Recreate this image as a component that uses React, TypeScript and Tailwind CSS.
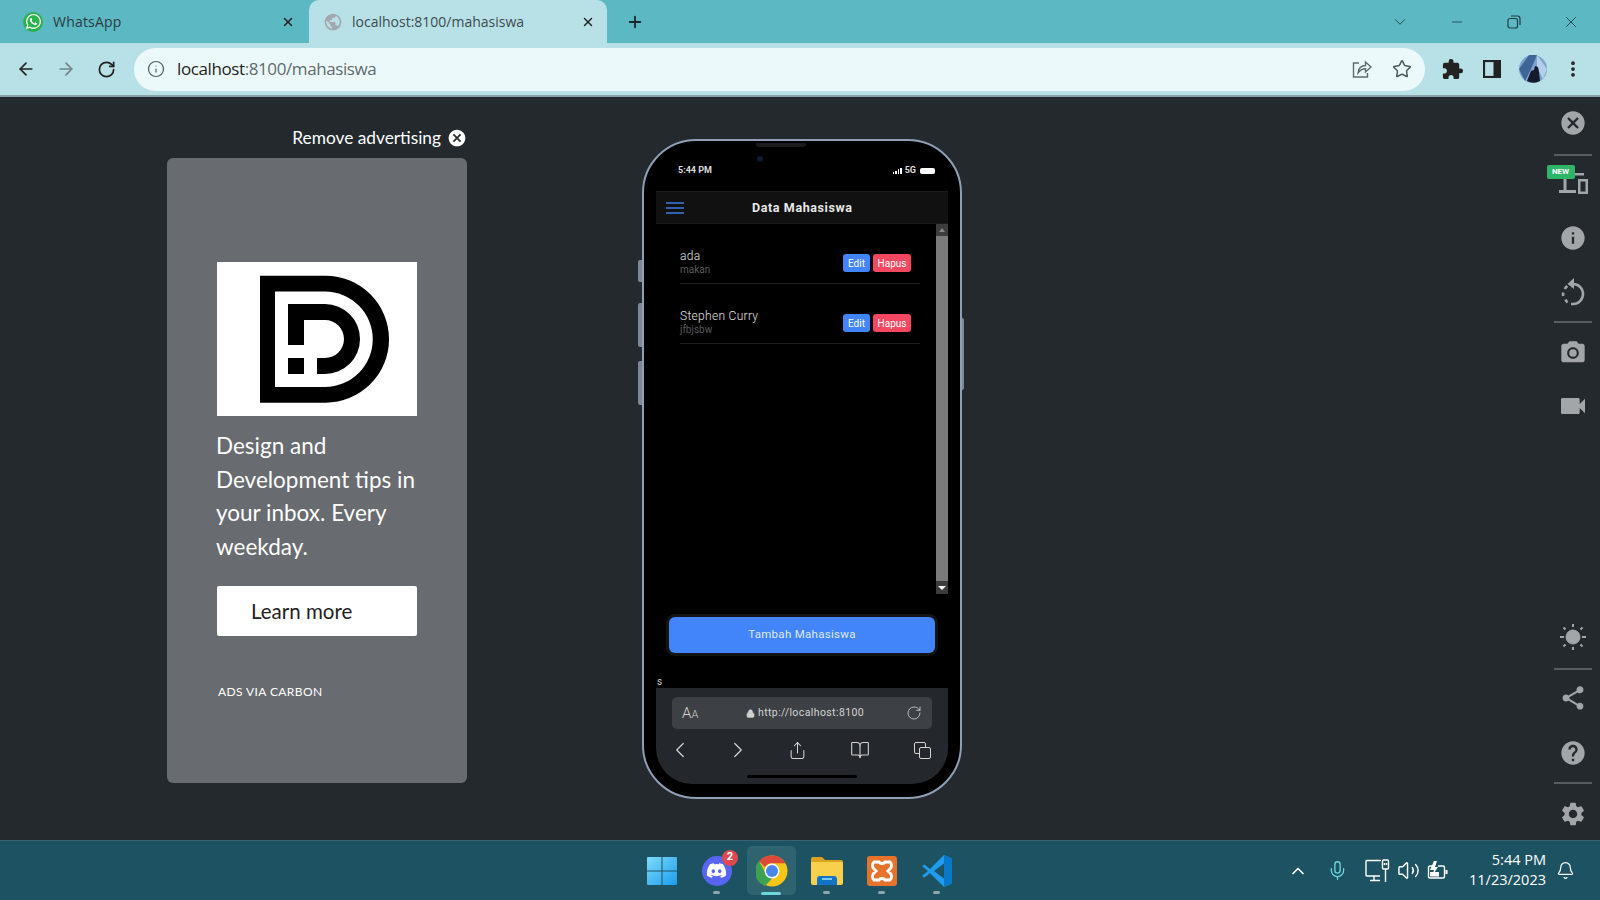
import React from 'react';
import { ArrowLeft, ArrowRight, RotateCw, Info, Star, X, Plus, ChevronDown, Minus, MoreVertical, ChevronLeft, ChevronRight, Share, BookOpen, Lock, ChevronUp, Mic, Volume2, Bell } from 'lucide-react';
import { FaWhatsapp, FaDiscord } from 'react-icons/fa';
import { MdCancel, MdInfo, MdPhotoCamera, MdVideocam, MdShare, MdHelp, MdSettings, MdPublic, MdExtension } from 'react-icons/md';

const Logo = () => (
    <svg width="200" height="154" viewBox="0 0 200 154" className="bg-white">
        <path fillRule="evenodd" d="M43 13.7H108.5A63.5 63.5 0 0 1 108.5 140.7H43ZM58 29.5V125H108A47.7 47.7 0 0 0 108 29.5Z" />
        <path d="M71 42H108A35 35 0 0 1 108 112H100V96H108A19 19 0 0 0 108 58H87V83H71Z" />
        <rect x="71" y="96" width="16" height="16" />
    </svg>
);

const Restore = () => (
    <svg width="16" height="16" viewBox="0 0 16 16" fill="none" stroke="#1f3d44" strokeWidth="1.2">
        <rect x="2" y="4.5" width="9.5" height="9.5" rx="2" />
        <path d="M5 2h6.5A2.5 2.5 0 0 1 14 4.5V11" />
    </svg>
);

const ShareBox = () => (
    <svg width="20" height="20" viewBox="0 0 20 20" fill="none" stroke="#5f6a6e" strokeWidth="1.4">
        <path d="M7 4H1.5v14h14v-4" />
        <path d="M6 14c0-5 4-7.5 7.5-7.5V3l5.5 5-5.5 5V9.800C10 9.800 8 11 6 14Z" />
    </svg>
);

const SidePanel = () => (
    <svg width="18" height="18" viewBox="0 0 18 18">
        <rect x="1" y="1" width="16" height="16" fill="none" stroke="#222" strokeWidth="2.200" />
        <rect x="10.500" y="1" width="6.500" height="16" fill="#222" />
    </svg>
);

const Avatar = () => (
    <svg width="28" height="28" viewBox="0 0 28 28">
        <circle cx="14" cy="14" r="14" fill="#7da3cf" />
        <path d="M0 14 10 0h8l-6 14-6 12Z" fill="#3f6596" />
        <path d="M18 0l10 14-4 10-6-12Z" fill="#b6cfe8" />
        <path d="M8 26l4-10 3-1 1-4 3 1 1 5 1 9a14 14 0 0 1-13 0Z" fill="#141a2c" />
    </svg>
);

const Devices = () => (
    <svg width="30" height="22" viewBox="0 0 30 22" fill="#a3a6a9">
        <path d="M3 0h22v2.500H7.500V17H17v3H0v-3h4.500V2.500H3Z" />
        <path fillRule="evenodd" d="M19 6h10v15H19ZM21.500 8.500v10h5v-10Z" />
    </svg>
);

const HistoryIcon = () => (
    <svg width="26" height="28" viewBox="0 0 26 28" fill="none" stroke="#a3a6a9" strokeWidth="2.600">
        <path d="M13 6a10 10 0 0 1 0 20h-2" />
        <path d="M7.500 24.500a10 10 0 0 1-2-3M3.200 18a10 10 0 0 1 0-3.500M4.800 11a10 10 0 0 1 2.500-3" />
        <path d="M14 0 7.500 6 14 11Z" fill="#a3a6a9" strokeWidth="0" />
    </svg>
);

const Sun = () => (
    <svg width="28" height="28" viewBox="0 0 28 28" fill="#a3a6a9" stroke="#a3a6a9">
        <circle cx="14" cy="14" r="7" />
        <path strokeWidth="2" d="M14 1v3M14 24v3M1 14h4M23 14h4M4.500 4.500l2 2M21.500 21.500l2 2M4.500 23.500l2-2M21.500 6.500l2-2" />
    </svg>
);

const Windows = () => (
    <svg width="30" height="30" viewBox="0 0 30 30">
        <defs>
            <linearGradient id="win" x1="0" y1="0" x2="1" y2="1">
                <stop offset="0" stopColor="#7fdcf8" />
                <stop offset="1" stopColor="#1a9bee" />
            </linearGradient>
        </defs>
        <path fill="url(#win)" d="M1 1h13.500v13.500H0V2a1 1 0 0 1 1-1ZM15.500 1H29a1 1 0 0 1 1 1v12.500H15.500ZM0 15.500h14.500V29H1a1 1 0 0 1-1-1ZM15.500 15.500H30V28a1 1 0 0 1-1 1H15.500Z" />
    </svg>
);

const ChromeIcon = () => (
    <svg width="32" height="32" viewBox="0 0 32 32">
        <circle cx="16" cy="16" r="15.500" fill="#f5c518" />
        <path d="M16 .5A15.500 15.500 0 0 1 29.500 8.300H16A8 8 0 0 0 8.900 12.300L3 6A15.500 15.500 0 0 1 16 .5Z" fill="#dd4a3a" />
        <path d="M3 6l7.500 13.500a7 7 0 0 0 6 3.500L9 31A15.500 15.500 0 0 1 3 6Z" fill="#3da252" />
        <circle cx="16" cy="16" r="7.500" fill="#fff" />
        <circle cx="16" cy="16" r="6" fill="#4a86e8" />
    </svg>
);

const Folder = () => (
    <svg width="32" height="28" viewBox="0 0 32 28">
        <path d="M0 2a2 2 0 0 1 2-2h9l3 3h16a2 2 0 0 1 2 2v3H0Z" fill="#dba420" />
        <path d="M0 5h32v21a2 2 0 0 1-2 2H2a2 2 0 0 1-2-2Z" fill="#f8d04c" />
        <path d="M6 28v-6a3 3 0 0 1 3-3h14a3 3 0 0 1 3 3v6Z" fill="#1174c9" />
        <rect x="11" y="21" width="10" height="2" fill="#7cc7f2" />
    </svg>
);

const Xampp = () => (
    <svg width="30" height="30" viewBox="0 0 30 30">
        <rect width="30" height="30" rx="3" fill="#e6732c" />
        <path fill="none" stroke="#fff" strokeWidth="3" d="M7 6h5c1 2 5 2 6 0h5c2 2 2 5 0 7l-2 2 2 2c2 2 2 5 0 7h-5c-1-2-5-2-6 0H7c-2-2-2-5 0-7l2-2-2-2c-2-2-2-5 0-7Z" />
    </svg>
);

const VsCode = () => (
    <svg width="30" height="32" viewBox="0 0 30 32">
        <path d="M22 0 30 3.500v25L22 32 8 18l-5.500 4.500L0 21l6-5-6-5 2.500-1.500L8 14Z" fill="#1f9cf0" />
        <path d="M22 0v32l8-3.500v-25Z" fill="#0a78c8" />
        <path d="M22 8.500 12 16l10 7.500Z" fill="#1c5261" />
    </svg>
);

const MonitorPlug = () => (
    <svg width="26" height="24" viewBox="0 0 26 24" fill="none" stroke="#fff" strokeWidth="1.400">
        <path d="M16 1.500H2a1 1 0 0 0-1 1V16a1 1 0 0 0 1 1h13M5 21.500h10M9 17v4" />
        <rect x="17.500" y="1" width="6" height="9" rx="1" />
        <path d="M20.500 10v13M19.500 4v2M21.500 4v2" />
    </svg>
);

const BatteryBolt = () => (
    <svg width="22" height="20" viewBox="0 0 22 20" fill="none" stroke="#fff" strokeWidth="1.400">
        <path d="M6 5H3a1.500 1.500 0 0 0-1.500 1.500v9A1.500 1.500 0 0 0 3 17h13a1.500 1.500 0 0 0 1.500-1.500v-9A1.500 1.500 0 0 0 16 5h-5" />
        <path d="M19.500 9v4" strokeWidth="2" />
        <path d="M7 0 3 9h4l-2 6 6-9H8l2-6Z" fill="#fff" stroke="none" />
        <rect x="3" y="11" width="9" height="4.500" fill="#fff" stroke="none" />
    </svg>
);

const Tabs = () => (
    <div className="flex h-[43px] shrink-0 items-center bg-[#5cb8c3] text-[#2a3c40]">
        <div className="flex h-full w-[309px] items-center">
            <span className="ml-[23px] flex h-[20px] w-[20px] items-center justify-center rounded-full bg-[#2ab24c] text-white"><FaWhatsapp size={17} /></span>
            <span className="ml-[10px] w-[228px] font-['Open_Sans',sans-serif] text-[14px] tracking-[0.2px]">WhatsApp</span>
            <X size={14} strokeWidth={2.500} className="text-[#222]" />
        </div>
        <div className="flex h-full w-[298px] items-center rounded-t-[10px] bg-[#b8e1e7]">
            <MdPublic size={20} className="ml-[14px] text-[#a1a8ae]" />
            <span className="ml-[9px] w-[229px] font-['Open_Sans',sans-serif] text-[14px] text-[#3c4a4e]">localhost:8100/mahasiswa</span>
            <X size={14} strokeWidth={2.500} className="text-[#222]" />
        </div>
        <Plus size={18} strokeWidth={2.500} className="ml-[19px] text-[#1c2a2e]" />
        <div className="ml-auto flex items-center text-[#1f3d44]">
            <ChevronDown size={18} strokeWidth={1.200} />
            <Minus size={16} strokeWidth={1.200} className="ml-[40px]" />
            <span className="ml-[41px]"><Restore /></span>
            <X size={18} strokeWidth={1.200} className="ml-[40px] mr-[20px]" />
        </div>
    </div>
);

const AddressBar = () => (
    <div className="flex h-[54px] shrink-0 items-center border-b-2 border-[#8ba3a8] bg-[#b8e1e7]">
        <ArrowLeft size={20} strokeWidth={2} className="ml-[16px] text-[#222]" />
        <ArrowRight size={20} strokeWidth={2} className="ml-[20px] text-[#6f8388]" />
        <RotateCw size={19} strokeWidth={2.200} className="ml-[21px] text-[#222]" />
        <div className="ml-[18px] flex h-[43px] w-[1291px] items-center rounded-full bg-[#ecf9fa]">
            <Info size={18} strokeWidth={1.600} className="ml-[13px] text-[#505c60]" />
            <span className="ml-[12px] font-['Open_Sans',sans-serif] text-[17px] tracking-[-0.4px] text-[#5f6a6e]"><span className="text-[#1e1e1e]">localhost</span>:8100/mahasiswa</span>
            <span className="ml-auto"><ShareBox /></span>
            <Star size={20} strokeWidth={1.800} className="ml-[20px] mr-[13px] text-[#4f5a5e]" />
        </div>
        <MdExtension size={23} className="ml-[16px] text-[#222]" />
        <span className="ml-[19px]"><SidePanel /></span>
        <span className="ml-[18px]"><Avatar /></span>
        <MoreVertical size={20} strokeWidth={2.500} className="ml-[16px] text-[#222]" />
    </div>
);

const AdPanel = () => (
    <div className="ml-[167px] w-[300px] shrink-0 pt-[31px]">
        <div className="flex h-[20px] items-center justify-end font-['Lato',sans-serif] text-[17.300px] text-white">
            Remove advertising
            <MdCancel size={20} className="ml-[6px]" />
        </div>
        <div className="mt-[10px] h-[625px] rounded-[6px] bg-[#686b70] pl-[50px] pt-[104px]">
            <Logo />
            <p className="-ml-px mt-[13px] w-[210px] font-['Lato',sans-serif] text-[22.500px] leading-[33.600px] text-white">Design and Development tips in your inbox. Every weekday.</p>
            <div className="mt-[23px] flex h-[50px] w-[200px] items-center rounded-[2px] bg-white pl-[34px] font-['Lato',sans-serif] text-[20.500px] text-[#222]">Learn more</div>
            <div className="mt-[47px] pl-[1px] font-['Lato',sans-serif] text-[12px] tracking-[0.4px] text-white">ADS VIA CARBON</div>
        </div>
    </div>
);

const Row = ({ name, sub }: { name: string; sub: string }) => (
    <div className="flex h-[60px] items-center border-b border-[#1e1e1e] pt-[19px]">
        <div className="mb-[2px] flex-1 font-['Roboto',sans-serif]">
            <div className="text-[12px] font-light leading-[14px] tracking-[0.3px] text-[#e0e0e0]">{name}</div>
            <div className="text-[10px] leading-[13px] text-[#5c5c5c]">{sub}</div>
        </div>
        <div className="mr-[3px] flex h-[18px] w-[27px] items-center justify-center rounded-[3px] bg-[#4285f8] font-['Roboto',sans-serif] text-[10px] text-white">Edit</div>
        <div className="mr-[9px] flex h-[18px] w-[38px] items-center justify-center rounded-[3px] bg-[#f5475f] font-['Roboto',sans-serif] text-[10px] text-white">Hapus</div>
    </div>
);

const Phone = () => (
    <div className="relative ml-[175px] mt-[42px] flex h-[660px] w-[320px] shrink-0 flex-col rounded-[54px] border-[2px] border-[#8fa0b5] bg-black px-[12px] pb-[13px]">
        <div className="flex h-[50px] shrink-0 items-center justify-between pl-[22px] pr-[13px] pt-[9px] font-['Roboto',sans-serif] text-[9px] font-bold text-[#dcdcdc]">
            <span>5:44 PM</span>
            <span className="flex items-center gap-[3px]">
                <span className="flex items-end gap-px">
                    <span className="h-[2px] w-[1.500px] bg-white" />
                    <span className="h-[3px] w-[1.500px] bg-white" />
                    <span className="h-[5px] w-[1.500px] bg-white" />
                    <span className="h-[6px] w-[1.500px] bg-white" />
                </span>
                5G
                <span className="ml-px h-[6px] w-[15px] rounded-[2px] bg-white" />
            </span>
        </div>
        <div className="flex h-[33px] shrink-0 items-center border-b border-t border-[#1c1c1c] bg-[#111112]">
            <div className="ml-[10px] flex w-[18px] flex-col gap-[3px]">
                <span className="h-[2px] bg-[#2f64ad]" />
                <span className="h-[2px] bg-[#2f64ad]" />
                <span className="h-[2px] bg-[#2f64ad]" />
            </div>
            <span className="ml-[68px] pt-[2px] font-['Roboto',sans-serif] text-[12.500px] font-bold tracking-[0.6px] text-[#e8e8e8]">Data Mahasiswa</span>
        </div>
        <div className="flex h-[370px] shrink-0">
            <div className="flex-1 pl-[24px] pr-[16px]">
                <Row name="ada" sub="makan" />
                <Row name="Stephen Curry" sub="jfbjsbw" />
            </div>
            <div className="flex w-[12px] flex-col bg-[#7a7a7a]">
                <div className="flex h-[12px] items-center justify-center bg-[#3c3c3c]"><span className="border-x-[3px] border-b-[4px] border-x-transparent border-b-[#888]" /></div>
                <div className="flex-1" />
                <div className="flex h-[13px] items-center justify-center bg-[#3c3c3c]"><span className="border-x-[4px] border-t-[4px] border-x-transparent border-t-white" /></div>
            </div>
        </div>
        <div className="ml-[13px] mt-[23px] flex h-[36px] w-[266px] shrink-0 items-center justify-center rounded-[6px] bg-[#4285fb] font-['Roboto',sans-serif] text-[11.500px] tracking-[0.3px] text-[#dfeaff] shadow-[0_0_0_3px_#141414]">Tambah Mahasiswa</div>
        <div className="mt-[22px] h-[13px] shrink-0 pl-px font-['Roboto',sans-serif] text-[10px] leading-[13px] text-[#cfcfcf]">s</div>
        <div className="flex flex-1 flex-col rounded-b-[36px] bg-[#24282c] px-[16px] pt-[9px]">
            <div className="flex h-[32px] items-center rounded-[5px] bg-[#3d4044] px-[10px] text-[#d4d4d4]">
                <span className="w-[64px] font-['Roboto',sans-serif] text-[15px] font-light">A<span className="text-[11px]">A</span></span>
                <Lock size={9} fill="#d4d4d4" strokeWidth={2} />
                <span className="ml-[3px] font-['Roboto',sans-serif] text-[10.500px] tracking-[0.4px]">http://localhost:8100</span>
                <RotateCw size={16} strokeWidth={1.200} className="ml-auto" />
            </div>
            <div className="mt-[8px] flex items-center text-[#d4d4d4]">
                <ChevronLeft size={26} strokeWidth={1.100} className="-ml-[5px]" />
                <ChevronRight size={26} strokeWidth={1.100} className="ml-[32px]" />
                <Share size={19} strokeWidth={1.300} className="ml-[37px]" />
                <BookOpen size={20} strokeWidth={1.300} className="ml-[43px]" />
                <span className="relative ml-[44px] h-[17px] w-[17px]">
                    <span className="absolute left-0 top-0 h-[12px] w-[12px] rounded-[2px] border border-[#d4d4d4]" />
                    <span className="absolute bottom-0 right-0 h-[12px] w-[12px] rounded-[2px] border border-[#d4d4d4] bg-[#24282c]" />
                </span>
            </div>
            <div className="mx-auto mt-[12px] h-[3px] w-[110px] rounded-full bg-black" />
        </div>
        {/* camera, notch and side buttons */}
        <div className="absolute left-[112px] top-[2px] h-[4px] w-[50px] rounded-b-[3px] bg-[#1a1a1a]" />
        <div className="absolute left-[113px] top-[15px] h-[6px] w-[6px] rounded-full bg-[#101a2e]" />
        <div className="absolute -left-[6px] top-[119px] h-[22px] w-[4px] rounded-l-[2px] bg-[#7d8896]" />
        <div className="absolute -left-[6px] top-[162px] h-[44px] w-[4px] rounded-l-[2px] bg-[#7d8896]" />
        <div className="absolute -left-[6px] top-[220px] h-[44px] w-[4px] rounded-l-[2px] bg-[#7d8896]" />
        <div className="absolute -right-[4px] top-[177px] h-[72px] w-[2px] rounded-r-[2px] bg-[#7d8896]" />
    </div>
);

const SideIcon = ({ className, children }: { className: string; children: React.ReactNode }) => (
    <div className={`flex items-center justify-center text-[#a3a6a9] ${className}`}>{children}</div>
);

const Divider = ({ className }: { className: string }) => <div className={`h-[2px] w-[38px] bg-[#595d60] ${className}`} />;

const Sidebar = () => (
    <div className="ml-auto flex w-[54px] shrink-0 flex-col items-center pt-[12px]">
        <SideIcon className="h-[28px]"><MdCancel size={28} /></SideIcon>
        <Divider className="mt-[17px]" />
        <div className="relative mt-[17px] flex h-[22px] items-center justify-center pl-[1px]">
            <Devices />
            <span className="absolute -left-[11px] -top-[8px] flex h-[14px] w-[28px] items-center justify-center rounded-[2px] bg-[#2fb56a] font-['Roboto',sans-serif] text-[8px] font-bold text-white">NEW</span>
        </div>
        <SideIcon className="mt-[29px] h-[28px]"><MdInfo size={28} /></SideIcon>
        <SideIcon className="mt-[26px] h-[28px]"><HistoryIcon /></SideIcon>
        <Divider className="mt-[15px]" />
        <SideIcon className="mt-[16px] h-[28px]"><MdPhotoCamera size={28} /></SideIcon>
        <SideIcon className="mt-[25px] h-[28px]"><MdVideocam size={32} /></SideIcon>
        <SideIcon className="mt-[203px] h-[28px]"><Sun /></SideIcon>
        <Divider className="mt-[17px]" />
        <SideIcon className="mt-[14px] h-[28px]"><MdShare size={28} /></SideIcon>
        <SideIcon className="mt-[27px] h-[28px]"><MdHelp size={28} /></SideIcon>
        <Divider className="mt-[15px]" />
        <SideIcon className="mt-[16px] h-[28px]"><MdSettings size={28} /></SideIcon>
    </div>
);

const TaskSlot = ({ dot, children }: { dot?: boolean; children: React.ReactNode }) => (
    <div className="relative flex h-[60px] w-[55px] items-center justify-center">
        {children}
        {dot && <span className="absolute bottom-[7px] left-[24px] h-[3px] w-[7px] rounded-full bg-[#8fa6ad]" />}
    </div>
);

const Taskbar = () => (
    <div className="flex h-[60px] shrink-0 items-center border-t border-[#3a6270] bg-[#1c5261] pl-[634px] text-white">
        <TaskSlot><Windows /></TaskSlot>
        <TaskSlot dot>
            <span className="flex h-[30px] w-[30px] items-center justify-center rounded-full bg-[#5865f2]"><FaDiscord size={21} /></span>
            <span className="absolute left-[33px] top-[9px] flex h-[16px] w-[16px] items-center justify-center rounded-full bg-[#e0484d] font-['Roboto',sans-serif] text-[11px] font-bold">2</span>
        </TaskSlot>
        <TaskSlot>
            <span className="flex h-[49px] w-[49px] items-center justify-center rounded-[5px] bg-[#2f6370]"><ChromeIcon /></span>
            <span className="absolute bottom-[6px] left-[17px] h-[3px] w-[20px] rounded-full bg-[#6fd5dc]" />
        </TaskSlot>
        <TaskSlot dot><Folder /></TaskSlot>
        <TaskSlot dot><Xampp /></TaskSlot>
        <TaskSlot dot><VsCode /></TaskSlot>
        <ChevronUp size={20} strokeWidth={2} className="ml-[324px]" />
        <Mic size={21} strokeWidth={1.500} className="ml-[19px] text-[#6fd5dc]" />
        <span className="ml-[17px]"><MonitorPlug /></span>
        <Volume2 size={23} strokeWidth={1.500} className="ml-[6px]" />
        <span className="ml-[7px]"><BatteryBolt /></span>
        <div className="mb-[2px] ml-[7px] w-[90px] text-right font-['Open_Sans',sans-serif] text-[14.500px] leading-[20px]">
            <div>5:44 PM</div>
            <div>11/23/2023</div>
        </div>
        <Bell size={19} strokeWidth={1.500} className="ml-[10px]" />
    </div>
);

export default function App() {
    return (
        <div className="flex h-[900px] w-[1600px] flex-col overflow-hidden bg-[#24292e]">
            <Tabs />
            <AddressBar />
            <div className="flex min-h-0 flex-1">
                <AdPanel />
                <Phone />
                <Sidebar />
            </div>
            <Taskbar />
        </div>
    );
}
